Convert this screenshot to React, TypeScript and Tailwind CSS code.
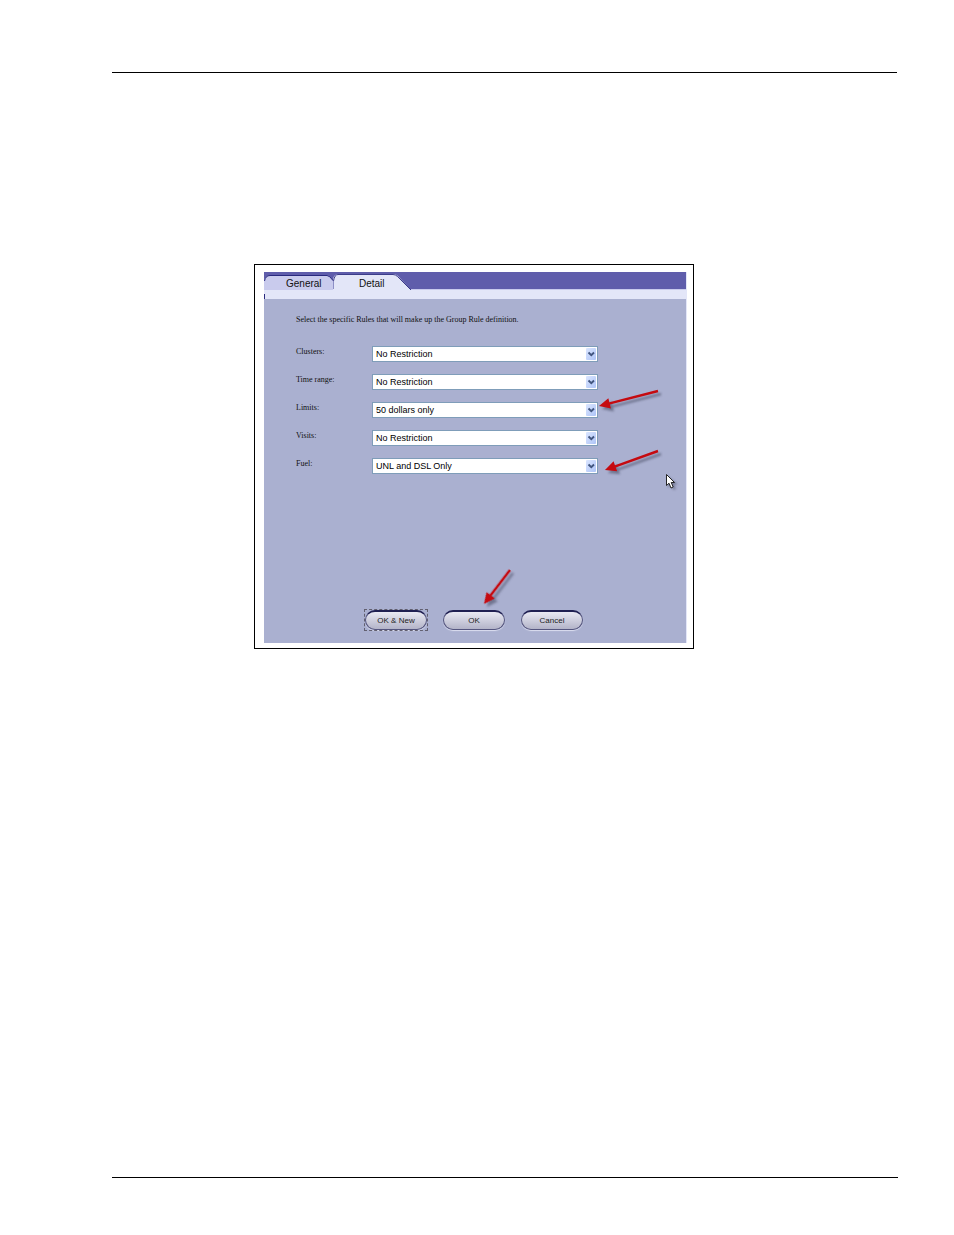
import { useState } from "react";

const fields = [
  { id: "clusters", label: "Clusters:", options: ["No Restriction"] },
  { id: "time-range", label: "Time range:", options: ["No Restriction"] },
  { id: "limits", label: "Limits:", options: ["50 dollars only", "No Restriction"] },
  { id: "visits", label: "Visits:", options: ["No Restriction"] },
  { id: "fuel", label: "Fuel:", options: ["UNL and DSL Only", "No Restriction"] },
];

function Tabs() {
  const [active, setActive] = useState("Detail");

  return (
    <div role="tablist" className="flex h-[17px] bg-[#5f5dab] font-['Liberation_Sans',sans-serif] text-[10px] leading-3 text-[#111]">
      <button
        type="button"
        role="tab"
        aria-selected={active === "General"}
        onClick={() => setActive("General")}
        className="relative h-[17px] w-[69px] pt-[6px] pl-[22px] text-left"
      >
        <svg className="absolute inset-0" width="69" height="17" viewBox="0 0 69 17">
          <path d="M0 17V9Q1 3.5 6 3.5H63Q66 3.5 69 9V17Z" fill="#c9cbed" />
          <path d="M0.5 9Q1.5 3.5 6 3.5H63Q65.5 3.5 69 8.5" fill="none" stroke="#29297d" />
        </svg>
        <span className="relative">General</span>
      </button>
      <button
        type="button"
        role="tab"
        aria-selected={active === "Detail"}
        onClick={() => setActive("Detail")}
        className="relative h-[17px] w-[79px] pt-[6px] pl-[26px] text-left"
      >
        <svg className="absolute inset-0 overflow-visible" width="79" height="18" viewBox="0 0 79 18">
          <path d="M0 18V7Q1 2 6 2H60Q63 2 65 4L78 18Z" fill="#e3e6f8" />
          <path d="M0.5 9Q1.5 2.5 5 2.5H60Q62.5 2.5 64.5 4.5L78 18" fill="none" stroke="#29297d" strokeWidth="0.9" />
          <path d="M0.5 9V17" stroke="#8d8fc6" />
        </svg>
        <span className="relative">Detail</span>
      </button>
    </div>
  );
}

function SelectField({ id, label, options }: { id: string; label: string; options: string[] }) {
  return (
    <div className="flex h-4">
      <label htmlFor={id} className="w-[76px] flex-none text-[8px] leading-3">
        {label}
      </label>
      <div className="relative flex-1">
        <select
          id={id}
          className="block h-4 w-full appearance-none rounded-none border border-[#7f9db9] bg-white pl-[3px] font-['Liberation_Sans',sans-serif] text-[9px] leading-[14px] text-black"
        >
          {options.map((o) => (
            <option key={o}>{o}</option>
          ))}
        </select>
        <svg className="pointer-events-none absolute top-px right-px" width="11" height="14" viewBox="0 0 11 14">
          <defs>
            <linearGradient id={`${id}-arrow`} x1="0" y1="0" x2="1" y2="1">
              <stop offset="0" stopColor="#dbe6ff" />
              <stop offset="1" stopColor="#aec4f7" />
            </linearGradient>
          </defs>
          <rect x="0" y="1" width="10" height="12" rx="1" fill={`url(#${id}-arrow)`} />
          <path d="M2.5 5.5L5.3 8.2L8 5.5" fill="none" stroke="#42567f" strokeWidth="1.9" />
        </svg>
      </div>
    </div>
  );
}

function PillButton({ children, focused }: { children: string; focused?: boolean }) {
  return (
    <div className={focused ? "outline-1 outline-dashed outline-[#626070]" : ""}>
      <button
        type="button"
        className="block h-5 w-[62px] rounded-full border border-t-2 border-[#55567f] border-t-[#202052] bg-linear-to-b from-[#e9e9f3] to-[#b3b4c8] font-['Liberation_Sans',sans-serif] text-[8px] leading-4 text-[#222] shadow-[0_1px_1px_#dcdff0]"
      >
        {children}
      </button>
    </div>
  );
}

function Arrow({ x1, y1, x2, y2 }: { x1: number; y1: number; x2: number; y2: number }) {
  const length = Math.hypot(x2 - x1, y2 - y1);
  const angle = (Math.atan2(y2 - y1, x2 - x1) * 180) / Math.PI;
  return (
    <g transform={`translate(${x1} ${y1}) rotate(${angle})`}>
      <path d={`M0 -1.2H${length - 11}V-5.3L${length} 0L${length - 11} 5.3V1.2H0Z`} />
    </g>
  );
}

function Callouts() {
  const arrows = [
    { x1: 404, y1: 127, x2: 345, y2: 142 },
    { x1: 404, y1: 187, x2: 351, y2: 206 },
    { x1: 256, y1: 306, x2: 230, y2: 340 },
  ];
  return (
    <svg aria-hidden="true" className="pointer-events-none absolute -top-px -left-px" width="440" height="385" viewBox="0 0 440 385">
      <defs>
        <filter id="soft" x="-20%" y="-20%" width="140%" height="140%">
          <feGaussianBlur stdDeviation="1.2" />
        </filter>
      </defs>
      <g fill="#4c5068" opacity="0.6" filter="url(#soft)" transform="translate(3 3)">
        {arrows.map((a) => (
          <Arrow key={a.y1} {...a} />
        ))}
      </g>
      <g fill="#c50a10">
        {arrows.map((a) => (
          <Arrow key={a.y1} {...a} />
        ))}
      </g>
      {/* mouse pointer */}
      <g transform="translate(412 210)">
        <path d="M2 2V14L5 11L7.5 16L10 15L8 10.5H12Z" fill="#4c5068" opacity="0.5" filter="url(#soft)" />
        <path d="M0.500 0.500V11.500L3 9.200L5 14L7.200 13L5.200 8.500H8.500Z" fill="#fff" stroke="#111" strokeWidth="0.900" />
      </g>
    </svg>
  );
}

export default function App() {
  return (
    <div className="flex min-h-screen flex-col bg-white pt-[72px] pr-14 pb-[57px] pl-28 font-['Liberation_Serif',serif] text-[#111]">
      <hr className="mr-px border-t border-black" />

      <main className="flex-1 pt-[191px] pl-[142px]">
        <div className="relative max-w-[440px] border border-black pt-[7px] pr-[6px] pb-[5px] pl-[9px]">
          <div className="border-r border-[#e3e6f8] bg-[#aab0d0]">
            <Tabs />
            <div className="h-[10px] border-t border-[#c9cbed] bg-[#e3e6f8] pt-1">
              <div className="h-[5px] w-px bg-[#29297d]" />
            </div>

            <form onSubmit={(e) => e.preventDefault()} className="pt-[15px] pb-[13px]">
              <p className="pl-8 text-[8px] leading-3">
                Select the specific Rules that will make up the Group Rule definition.
              </p>

              <div className="mt-5 flex flex-col gap-3 pr-[88px] pl-8">
                {fields.map((f) => (
                  <SelectField key={f.id} {...f} />
                ))}
              </div>

              <div className="mt-[136px] flex justify-center gap-4 pr-[2px]">
                <PillButton focused>OK &amp; New</PillButton>
                <PillButton>OK</PillButton>
                <PillButton>Cancel</PillButton>
              </div>
            </form>
          </div>
          <Callouts />
        </div>
      </main>

      <hr className="border-t border-black" />
    </div>
  );
}
